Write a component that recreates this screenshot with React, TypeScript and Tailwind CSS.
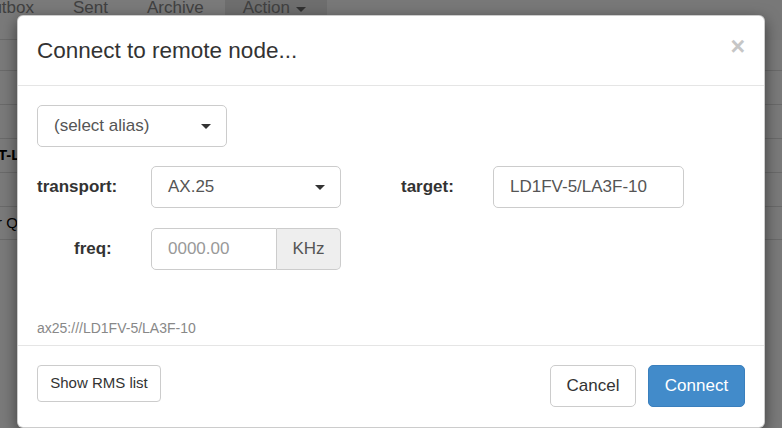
import React from "react";

function Caret({ color = "#333" }: { color?: string }) {
  return (
    <span
      className="block w-0 h-0 border-l-[5px] border-r-[5px] border-t-[5px] border-l-transparent border-r-transparent"
      style={{ borderTopColor: color }}
    />
  );
}

export default function App() {
  return (
    <div
      className="relative w-[782px] h-[428px] overflow-hidden bg-white"
      style={{ fontFamily: '"Liberation Sans", Arial, sans-serif' }}
    >
      {/* underlying page */}
      <div className="absolute inset-0">
        <div className="flex h-[40px] items-start text-[17px] leading-[20px] text-[#888] border-b border-[#ddd]">
          <div className="w-[36px] -ml-[2px] -mt-[2px] overflow-hidden whitespace-nowrap flex justify-end">
            <span>utbox</span>
          </div>
          <div className="ml-[39px] -mt-[2px]">Sent</div>
          <div className="ml-[39px] -mt-[2px]">Archive</div>
          <div className="ml-[21px] w-[102px] h-[45px] bg-[#e6e6e6] pl-[18px] flex items-start gap-[6px] -mt-[2px]">
            <span>Action</span>
            <span className="mt-[9px]">
              <Caret color="#666" />
            </span>
          </div>
          <div className="flex-1 h-[40px] bg-[#fbfbfb]" />
        </div>
        <div className="flex flex-col">
          <div className="h-[31px] border-b border-[#ddd]" />
          <div className="h-[34px] border-b border-[#ddd]" />
          <div className="h-[34px] border-b border-[#ddd]" />
          <div className="h-[34px] border-b border-[#ddd] text-[15px] font-bold text-black flex items-center -ml-[2px]">T-L</div>
          <div className="h-[34px] border-b border-[#ddd]" />
          <div className="h-[33px] border-b border-[#ddd] text-[15px] text-black flex items-center -ml-[3px]">r Q</div>
        </div>
      </div>
      {/* backdrop */}
      <div className="absolute inset-0 bg-black/[0.52]" />

      {/* modal */}
      <div className="absolute left-[17px] top-[15px] w-[748px] h-[413px] bg-white rounded-[6px] border border-black/20 shadow-[0_5px_15px_rgba(0,0,0,0.5)] flex flex-col text-[#333]">
        <div className="h-[70px] border-b border-[#e5e5e5] flex items-center justify-between pl-[19px] pr-[19px] shrink-0">
          <div className="text-[22.5px] leading-none mt-[1px]">Connect to remote node...</div>
          <div className="text-[25px] font-bold text-[#c6c6c6] leading-none -mt-[8px]">×</div>
        </div>
        <div className="h-[260px] px-[19px] pt-[19px] flex flex-col shrink-0 border-b border-[#e5e5e5]">
          <div className="w-[190px] h-[42px] border border-[#ccc] rounded-[5px] flex items-center justify-between pl-[16px] pr-[15px] text-[17px] text-[#555]">
            <span>(select alias)</span>
            <Caret />
          </div>
          <div className="flex items-center mt-[19px] h-[42px]">
            <div className="w-[114px] font-bold text-[17px]">transport:</div>
            <div className="w-[190px] h-[42px] border border-[#ccc] rounded-[5px] flex items-center justify-between pl-[16px] pr-[15px] text-[17px] text-[#555]">
              <span>AX.25</span>
              <Caret />
            </div>
            <div className="ml-[60px] w-[92px] font-bold text-[17px]">target:</div>
            <div className="w-[191px] h-[42px] border border-[#ccc] rounded-[5px] flex items-center pl-[16px] text-[17px] text-[#555]">
              LD1FV-5/LA3F-10
            </div>
          </div>
          <div className="flex items-center mt-[20px] h-[42px]">
            <div className="w-[114px] font-bold text-[17px] pl-[37px]">freq:</div>
            <div className="flex h-[42px] w-[190px]">
              <div className="w-[126px] h-full border border-[#ccc] rounded-l-[5px] flex items-center pl-[16px] text-[17px] text-[#999]">
                0000.00
              </div>
              <div className="flex-1 h-full border border-l-0 border-[#ccc] rounded-r-[5px] bg-[#eee] flex items-center justify-center text-[17px] text-[#555]">
                KHz
              </div>
            </div>
          </div>
          <div className="mt-auto mb-[6px] text-[14px] text-[#888]">ax25:///LD1FV-5/LA3F-10</div>
        </div>
        <div className="flex-1 px-[19px] pt-[19px] flex items-start justify-between">
          <div className="h-[37px] w-[124px] border border-[#ccc] rounded-[4px] flex items-center justify-center text-[15px] text-[#333]">
            Show RMS list
          </div>
          <div className="flex gap-[12px]">
            <div className="h-[42px] w-[86px] border border-[#ccc] rounded-[5px] flex items-center justify-center text-[17px] text-[#333]">
              Cancel
            </div>
            <div className="h-[42px] w-[97px] border border-[#3a7fbd] bg-[#428bca] rounded-[5px] flex items-center justify-center text-[17px] text-white">
              Connect
            </div>
          </div>
        </div>
      </div>
    </div>
  );
}
